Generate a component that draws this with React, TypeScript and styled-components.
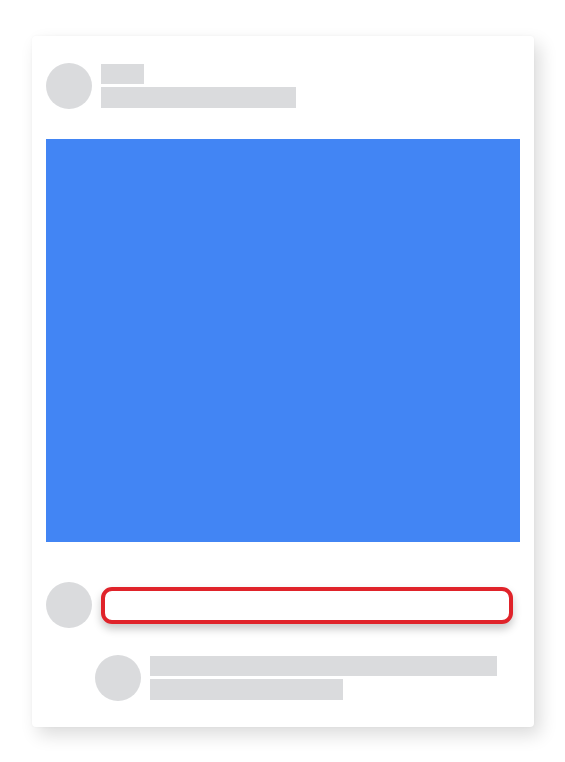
import styled, { createGlobalStyle } from "styled-components";

const GlobalStyle = createGlobalStyle`
  body {
    margin: 0;
    background-color: #ffffff;
    font-family: "Liberation Sans", Arial, sans-serif;
  }
`;

const Page = styled.div`
  padding: 36px 0 0 32px;
  width: 565px;
  height: 762px;
  box-sizing: border-box;
`;

const Card = styled.div`
  width: 502px;
  box-sizing: border-box;
  padding: 27px 14px 26px 14px;
  background-color: #ffffff;
  border-radius: 4px;
  box-shadow: 6px 8px 18px rgba(0, 0, 0, 0.14), 0 0 3px rgba(0, 0, 0, 0.04);
  display: flex;
  flex-direction: column;
`;

const Row = styled.div<{ $indent?: number; $top?: number }>`
  display: flex;
  align-items: center;
  gap: 9px;
  margin-left: ${(p) => p.$indent ?? 0}px;
  margin-top: ${(p) => p.$top ?? 0}px;
`;

const Avatar = styled.div`
  width: 46px;
  height: 46px;
  flex-shrink: 0;
  border-radius: 50%;
  background-color: #dadbdd;
`;

const Lines = styled.div`
  display: flex;
  flex-direction: column;
  gap: 3px;
`;

const Line = styled.div<{ $w: number; $h?: number }>`
  width: ${(p) => p.$w}px;
  height: ${(p) => p.$h ?? 21}px;
  background-color: #dadbdd;
`;

const Photo = styled.div`
  margin-top: 30px;
  width: 474px;
  height: 403px;
  background-color: #4285f4;
`;

const CommentInput = styled.div`
  width: 412px;
  height: 37px;
  box-sizing: border-box;
  border: 4px solid #e0232a;
  border-radius: 11px;
  background-color: #ffffff;
  box-shadow: 0 5px 9px rgba(0, 0, 0, 0.22);
`;

function App() {
  return (
    <>
      <GlobalStyle />
      <Page>
        <Card>
          <Row>
            <Avatar />
            <Lines>
              <Line $w={43} $h={20} />
              <Line $w={195} />
            </Lines>
          </Row>

          <Photo />

          <Row $top={40}>
            <Avatar />
            <CommentInput />
          </Row>

          <Row $indent={49} $top={27}>
            <Avatar />
            <Lines>
              <Line $w={347} $h={20} />
              <Line $w={193} />
            </Lines>
          </Row>
        </Card>
      </Page>
    </>
  );
}

export default App;
